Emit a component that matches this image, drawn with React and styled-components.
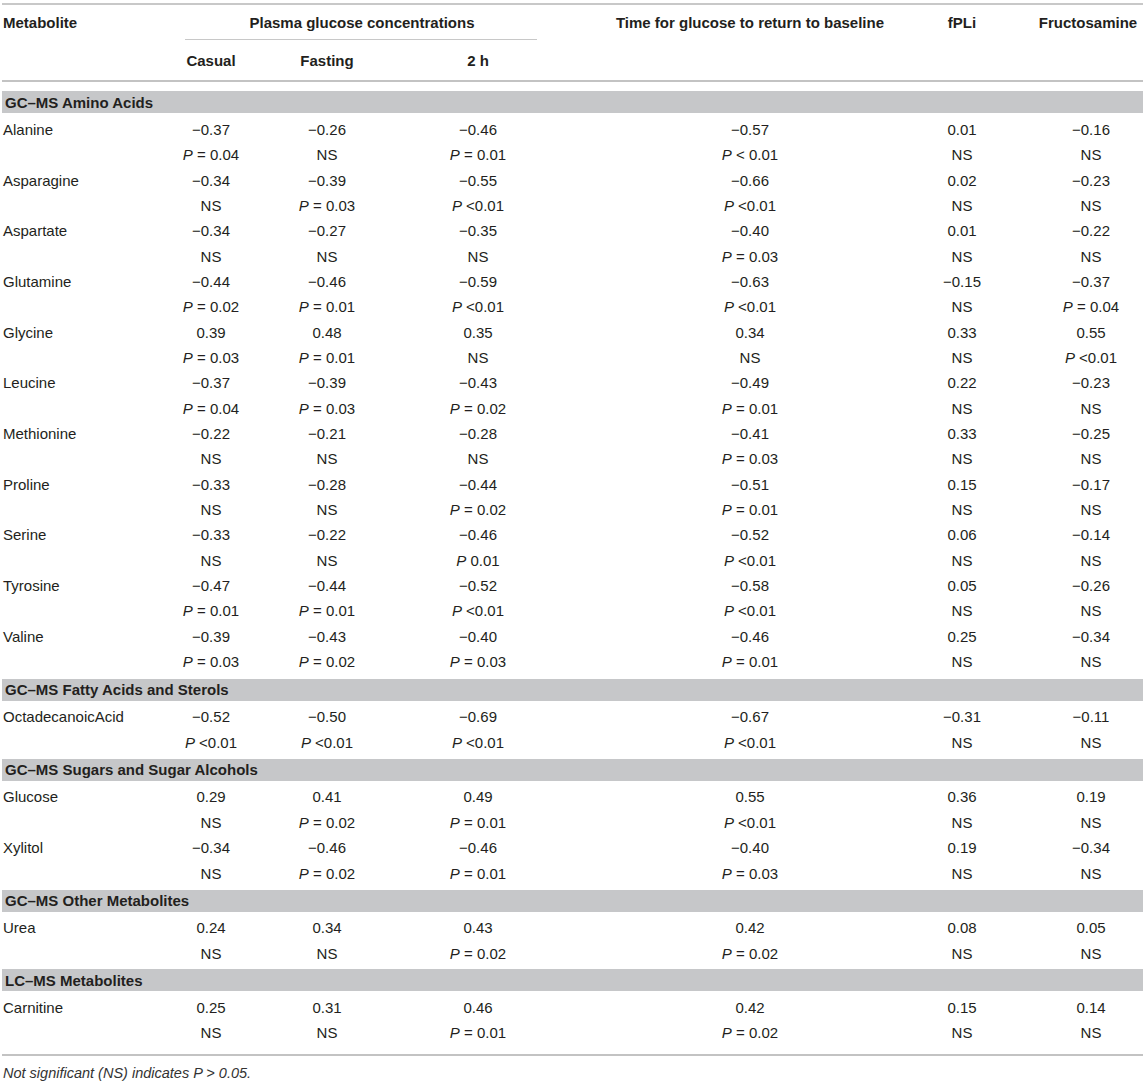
import React from 'react';
import styled, { createGlobalStyle } from 'styled-components';

const GlobalStyle = createGlobalStyle`
  html, body {
    margin: 0;
    padding: 0;
    background: #ffffff;
  }
  body {
    font-family: "Liberation Sans", Arial, sans-serif;
    color: #231f20;
  }
`;

// shared column template for header + every data row
const COLS = '148px 122px 110px 192px 352px 72px 1fr';

const Page = styled.div`
  width: 1143px;
  box-sizing: border-box;
  padding: 3px 0 0 2px;
`;

const Table = styled.div`
  border-top: 2px solid #c8c8c8;
  font-size: 15px;
`;

const Head = styled.div`
  display: grid;
  grid-template-columns: ${COLS};
  grid-template-rows: 34px 1px 40px;
  border-bottom: 2px solid #c3c3c3;
  font-weight: bold;
`;

const HeadCell = styled.div`
  grid-column: ${p => p.col};
  grid-row: ${p => p.row || 1};
  display: flex;
  align-items: center;
  justify-content: ${p => (p.left ? 'flex-start' : 'center')};
  padding-left: ${p => p.shift || 0}px;
  white-space: nowrap;
`;

const SpanRule = styled.div`
  grid-column: 2 / 5;
  grid-row: 2;
  margin: 0 37px 0 35px;
  background: #c8c8c8;
`;

const Band = styled.div`
  height: 22px;
  margin: ${p => p.mt}px 0 ${p => p.mb}px;
  padding-left: 3px;
  display: flex;
  align-items: center;
  background: #c6c7c9;
  font-weight: bold;
`;

const Row = styled.div`
  display: grid;
  grid-template-columns: ${COLS};
  align-items: center;
  height: ${p => p.h}px;
`;

const NameCell = styled.div`
  padding-left: 1px;
  white-space: nowrap;
`;

const Cell = styled.div`
  text-align: center;
  padding-left: ${p => p.shift || 0}px;
  white-space: nowrap;
`;

const I = styled.i`
  font-style: italic;
`;

const BottomRule = styled.div`
  margin-top: 8px;
  border-top: 2px solid #c3c3c3;
`;

const Footnote = styled.div`
  padding: 8px 0 0 1px;
  line-height: 18px;
  font-size: 14.5px;
  font-style: italic;
  color: #333;
`;

const sections = [
  {
    title: 'GC\u2013MS Amino Acids', mt: 9, mb: 4, h: 25.33,
    rows: [
      ['Alanine', ['−0.37', '−0.26', '−0.46', '−0.57', '0.01', '−0.16'], ['P = 0.04', 'NS', 'P = 0.01', 'P < 0.01', 'NS', 'NS']],
      ['Asparagine', ['−0.34', '−0.39', '−0.55', '−0.66', '0.02', '−0.23'], ['NS', 'P = 0.03', 'P <0.01', 'P <0.01', 'NS', 'NS']],
      ['Aspartate', ['−0.34', '−0.27', '−0.35', '−0.40', '0.01', '−0.22'], ['NS', 'NS', 'NS', 'P = 0.03', 'NS', 'NS']],
      ['Glutamine', ['−0.44', '−0.46', '−0.59', '−0.63', '−0.15', '−0.37'], ['P = 0.02', 'P = 0.01', 'P <0.01', 'P <0.01', 'NS', 'P = 0.04']],
      ['Glycine', ['0.39', '0.48', '0.35', '0.34', '0.33', '0.55'], ['P = 0.03', 'P = 0.01', 'NS', 'NS', 'NS', 'P <0.01']],
      ['Leucine', ['−0.37', '−0.39', '−0.43', '−0.49', '0.22', '−0.23'], ['P = 0.04', 'P = 0.03', 'P = 0.02', 'P = 0.01', 'NS', 'NS']],
      ['Methionine', ['−0.22', '−0.21', '−0.28', '−0.41', '0.33', '−0.25'], ['NS', 'NS', 'NS', 'P = 0.03', 'NS', 'NS']],
      ['Proline', ['−0.33', '−0.28', '−0.44', '−0.51', '0.15', '−0.17'], ['NS', 'NS', 'P = 0.02', 'P = 0.01', 'NS', 'NS']],
      ['Serine', ['−0.33', '−0.22', '−0.46', '−0.52', '0.06', '−0.14'], ['NS', 'NS', 'P 0.01', 'P <0.01', 'NS', 'NS']],
      ['Tyrosine', ['−0.47', '−0.44', '−0.52', '−0.58', '0.05', '−0.26'], ['P = 0.01', 'P = 0.01', 'P <0.01', 'P <0.01', 'NS', 'NS']],
      ['Valine', ['−0.39', '−0.43', '−0.40', '−0.46', '0.25', '−0.34'], ['P = 0.03', 'P = 0.02', 'P = 0.03', 'P = 0.01', 'NS', 'NS']],
    ],
  },
  {
    title: 'GC\u2013MS Fatty Acids and Sterols', mt: 4.7, mb: 3, h: 25.8,
    rows: [
      ['OctadecanoicAcid', ['−0.52', '−0.50', '−0.69', '−0.67', '−0.31', '−0.11'], ['P <0.01', 'P <0.01', 'P <0.01', 'P <0.01', 'NS', 'NS']],
    ],
  },
  {
    title: 'GC\u2013MS Sugars and Sugar Alcohols', mt: 3, mb: 3, h: 25.8,
    rows: [
      ['Glucose', ['0.29', '0.41', '0.49', '0.55', '0.36', '0.19'], ['NS', 'P = 0.02', 'P = 0.01', 'P <0.01', 'NS', 'NS']],
      ['Xylitol', ['−0.34', '−0.46', '−0.46', '−0.40', '0.19', '−0.34'], ['NS', 'P = 0.02', 'P = 0.01', 'P = 0.03', 'NS', 'NS']],
    ],
  },
  {
    title: 'GC\u2013MS Other Metabolites', mt: 3, mb: 3, h: 25.8,
    rows: [
      ['Urea', ['0.24', '0.34', '0.43', '0.42', '0.08', '0.05'], ['NS', 'NS', 'P = 0.02', 'P = 0.02', 'NS', 'NS']],
    ],
  },
  {
    title: 'LC\u2013MS Metabolites', mt: 3, mb: 3, h: 25.8,
    rows: [
      ['Carnitine', ['0.25', '0.31', '0.46', '0.42', '0.15', '0.14'], ['NS', 'NS', 'P = 0.01', 'P = 0.02', 'NS', 'NS']],
    ],
  },
];

// last column sits a little right of its track centre
const shiftFor = i => (i === 5 ? 41 : 0);

const PValue = ({ v }) =>
  v.startsWith('P') ? (
    <>
      <I>P</I>
      {v.slice(1)}
    </>
  ) : (
    v
  );

const Metabolite = ({ name, values, pvals, h }) => (
  <>
    <Row h={h}>
      <NameCell>{name}</NameCell>
      {values.map((v, i) => (
        <Cell key={i} shift={shiftFor(i)}>{v}</Cell>
      ))}
    </Row>
    <Row h={h}>
      <NameCell />
      {pvals.map((v, i) => (
        <Cell key={i} shift={shiftFor(i)}>
          <PValue v={v} />
        </Cell>
      ))}
    </Row>
  </>
);

export default function App() {
  return (
    <Page>
      <GlobalStyle />
      <Table>
        <Head>
          <HeadCell col="1" left shift={1}>Metabolite</HeadCell>
          <HeadCell col="2 / 5">Plasma glucose concentrations</HeadCell>
          <HeadCell col="5">Time for glucose to return to baseline</HeadCell>
          <HeadCell col="6">fPLi</HeadCell>
          <HeadCell col="7" shift={35}>Fructosamine</HeadCell>
          <SpanRule />
          <HeadCell col="2" row={3}>Casual</HeadCell>
          <HeadCell col="3" row={3}>Fasting</HeadCell>
          <HeadCell col="4" row={3}>2 h</HeadCell>
        </Head>

        {sections.map(s => (
          <React.Fragment key={s.title}>
            <Band mt={s.mt} mb={s.mb}>{s.title}</Band>
            {s.rows.map(([name, values, pvals]) => (
              <Metabolite key={name} name={name} values={values} pvals={pvals} h={s.h} />
            ))}
          </React.Fragment>
        ))}

        <BottomRule />
        <Footnote>
          Not significant (NS) indicates P {'>'} 0.05.
        </Footnote>
      </Table>
    </Page>
  );
}
